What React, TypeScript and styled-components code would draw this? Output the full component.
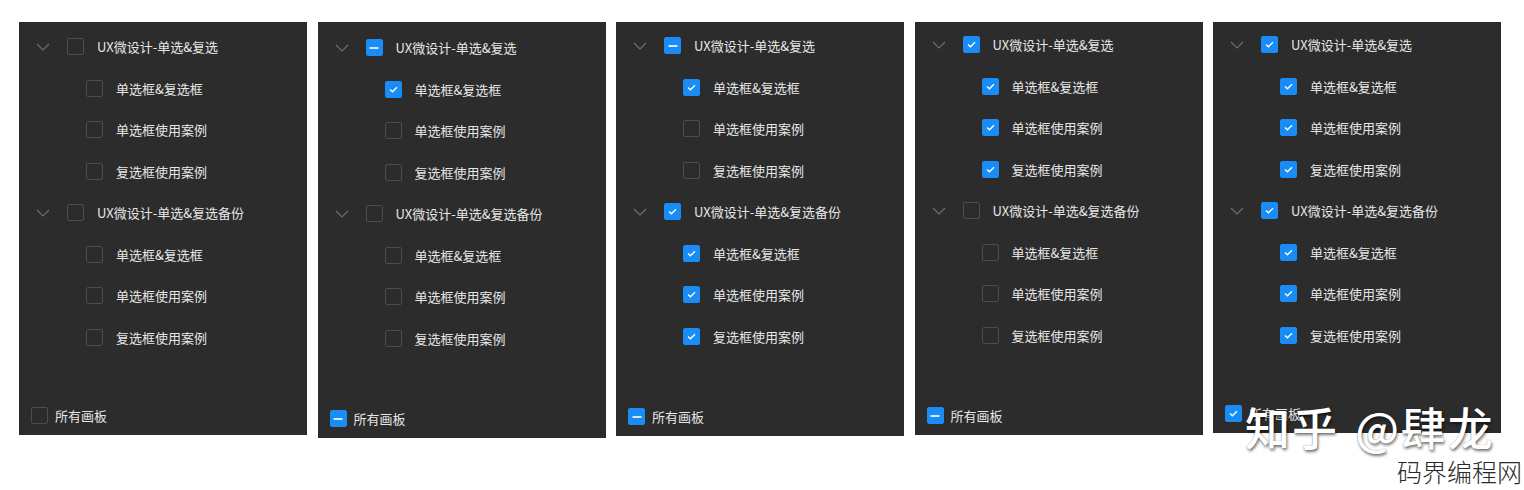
import styled, { createGlobalStyle } from "styled-components"

const GlobalStyle = createGlobalStyle`
  html, body {
    margin: 0;
    padding: 0;
    background: #ffffff;
  }
  body {
    font-family: "Noto Sans CJK SC", "Noto Sans", sans-serif;
  }
`

type Mark = "none" | "some" | "all"

type Group = {
  title: string
  items: boolean[]
}

type PanelSpec = {
  padTop: number
  height: number
  groups: Group[]
}

const ITEM_NAMES = ["单选框&复选框", "单选框使用案例", "复选框使用案例"]
const GROUP_NAMES = ["UX微设计-单选&复选", "UX微设计-单选&复选备份"]

const makeGroups = (a: boolean[], b: boolean[]): Group[] => [
  { title: GROUP_NAMES[0], items: a },
  { title: GROUP_NAMES[1], items: b },
]

const PANELS: PanelSpec[] = [
  { padTop: 4, height: 413, groups: makeGroups([false, false, false], [false, false, false]) },
  { padTop: 5, height: 416, groups: makeGroups([true, false, false], [false, false, false]) },
  { padTop: 3, height: 414, groups: makeGroups([true, false, false], [true, true, true]) },
  { padTop: 2, height: 413, groups: makeGroups([true, true, true], [false, false, false]) },
  { padTop: 2, height: 411, groups: makeGroups([true, true, true], [true, true, true]) },
]

const markOf = (values: boolean[]): Mark => {
  const on = values.filter(Boolean).length
  if (on === 0) return "none"
  if (on === values.length) return "all"
  return "some"
}

const Page = styled.div`
  position: relative;
  width: 1524px;
  height: 490px;
  overflow: hidden;
`

const Strip = styled.div`
  display: flex;
  align-items: flex-start;
  gap: 10.5px;
  padding: 22px 0 0 19px;
`

const Panel = styled.div<{ $padTop: number; $height: number }>`
  width: 288px;
  height: ${(p) => p.$height}px;
  box-sizing: border-box;
  padding-top: ${(p) => p.$padTop}px;
  background: #2c2c2c;
  display: flex;
  flex-direction: column;
`

const Row = styled.div<{ $indent: number }>`
  height: 41.5px;
  display: flex;
  align-items: center;
  padding-left: ${(p) => p.$indent}px;
  color: #e6e6e6;
  font-size: 13px;
`

const Chevron = styled.svg`
  width: 14px;
  height: 8px;
  margin-right: 17px;
  flex-shrink: 0;
`

const Box = styled.span<{ $mark: Mark }>`
  width: 17px;
  height: 17px;
  box-sizing: border-box;
  border-radius: 2px;
  flex-shrink: 0;
  margin-right: 13px;
  display: flex;
  align-items: center;
  justify-content: center;
  background: ${(p) => (p.$mark === "none" ? "transparent" : "#1a8cf5")};
  border: 1px solid ${(p) => (p.$mark === "none" ? "#4d4d4d" : "#1a8cf5")};
`

const Label = styled.span`
  white-space: nowrap;
  letter-spacing: 0;
`

const Footer = styled.div`
  margin-top: auto;
  height: 39px;
  display: flex;
  align-items: center;
  padding-left: 12px;
  color: #e6e6e6;
  font-size: 13px;
  & > span:first-child {
    margin-right: 7px;
  }
`

const Watermark = styled.div`
  position: absolute;
  left: 1245px;
  top: 404px;
  font-size: 45px;
  line-height: 1;
  font-weight: 500;
  color: #ffffff;
  letter-spacing: 2px;
  word-spacing: 4px;
  white-space: nowrap;
  text-shadow: 1px 2px 3px rgba(0, 0, 0, 0.55), 0 0 1px rgba(0, 0, 0, 0.4);
`

const SiteName = styled.div`
  position: absolute;
  left: 1397px;
  top: 458px;
  font-size: 25px;
  line-height: 1.1;
  font-weight: 300;
  color: #2a2a2a;
  white-space: nowrap;
`

const Check = ({ mark }: { mark: Mark }) => (
  <Box $mark={mark}>
    {mark === "all" && (
      <svg width="11" height="9" viewBox="0 0 11 9">
        <path d="M2 4.6 L4.4 6.8 L9 2.2" fill="none" stroke="#fff" strokeWidth="1.3" />
      </svg>
    )}
    {mark === "some" && (
      <svg width="10" height="2" viewBox="0 0 10 2">
        <rect x="0.5" y="0.2" width="9" height="1.6" fill="#fff" />
      </svg>
    )}
  </Box>
)

const TreePanel = ({ spec }: { spec: PanelSpec }) => {
  const all = spec.groups.flatMap((g) => g.items)
  return (
    <Panel $padTop={spec.padTop} $height={spec.height}>
      {spec.groups.map((g) => (
        <div key={g.title}>
          <Row $indent={17}>
            <Chevron viewBox="0 0 14 8">
              <path d="M1 1 L7 7 L13 1" fill="none" stroke="#6e6e6e" strokeWidth="1.2" />
            </Chevron>
            <Check mark={markOf(g.items)} />
            <Label>{g.title}</Label>
          </Row>
          {g.items.map((on, i) => (
            <Row key={ITEM_NAMES[i]} $indent={67}>
              <Check mark={on ? "all" : "none"} />
              <Label>{ITEM_NAMES[i]}</Label>
            </Row>
          ))}
        </div>
      ))}
      <Footer>
        <Check mark={markOf(all)} />
        <Label>所有画板</Label>
      </Footer>
    </Panel>
  )
}

export default function App() {
  return (
    <Page>
      <GlobalStyle />
      <Strip>
        {PANELS.map((p, i) => (
          <TreePanel key={i} spec={p} />
        ))}
      </Strip>
      <Watermark>知乎 @肆龙</Watermark>
      <SiteName>码界编程网</SiteName>
    </Page>
  )
}
